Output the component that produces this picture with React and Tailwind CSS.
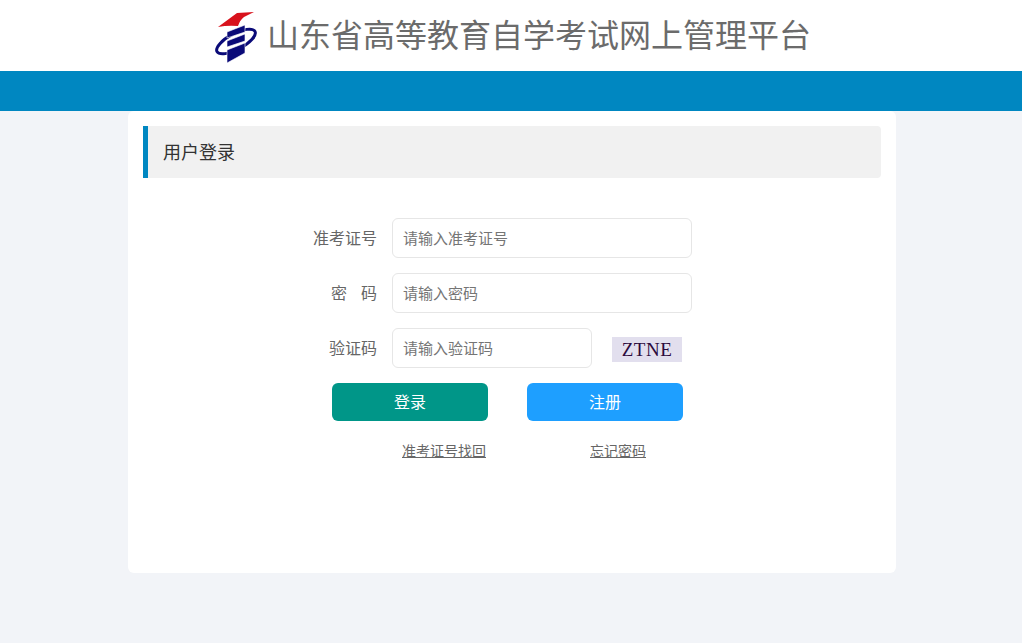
import React from 'react';

const fontStack = '"Noto Sans CJK SC", sans-serif';

function Logo() {
  return (
    <svg width="44" height="54" viewBox="-1 0 44 54" className="shrink-0 mt-[5px]">
      <path d="M4 16 L23 2 L40 1 L30 6 Q26 9 24 15 Q14 14 4 16 Z" fill="#d8121c" />
      <ellipse cx="22" cy="30.5" rx="21.5" ry="8" transform="rotate(-28 22 30.5)" fill="none" stroke="#0a0a78" strokeWidth="3" />
      <path d="M13 21 L31 14 L31 21 L13 27 Z M13 30 L31 23 L31 30 L13 36 Z M13 39 L31 32 L31 42 L13 52 Z" fill="#0a0a78" stroke="#fff" strokeWidth="0.6" />
    </svg>
  );
}

function Row({ label, placeholder, short, children }) {
  return (
    <div className="flex items-center h-10 mb-[15px]">
      <label className="w-[249px] pr-[15px] pb-[2px] text-right text-base text-[#666] whitespace-pre">{label}</label>
      <input
        type="text"
        placeholder={placeholder}
        className={`${short ? 'w-[200px]' : 'w-[300px]'} h-10 pl-[10px] pr-[10px] pb-[2px] bg-white border border-[#e6e6e6] rounded-md text-[15px] placeholder:text-[#757575] outline-none`}
      />
      {children}
    </div>
  );
}

export default function App() {
  return (
    <div className="min-h-[643px] bg-[#f2f4f8]" style={{ fontFamily: fontStack }}>
      <header className="h-[71px] bg-white flex items-center justify-center gap-[10px] pl-[2px]">
        <Logo />
        <h1 className="mb-[6px] text-[32px] leading-none text-[#6b6b6b] whitespace-nowrap">山东省高等教育自学考试网上管理平台</h1>
      </header>
      <div className="h-10 bg-[#0087c1]" />
      <main className="w-[768px] h-[462px] ml-[128px] bg-white rounded-md p-[15px]">
        <div className="h-[52px] pl-[15px] pb-[2px] flex items-center bg-[#f1f1f1] border-l-[5px] border-[#0087c1] rounded-r-sm text-lg text-[#333]">
          用户登录
        </div>
        <form className="mt-10">
          <Row label="准考证号" placeholder="请输入准考证号" />
          <Row label={<>密<span className="inline-block w-[14px]" />码</>} placeholder="请输入密码" />
          <Row label="验证码" placeholder="请输入验证码" short>
            <span className="ml-5 mt-[2px] w-[70px] h-[25px] bg-[#e2dfee] text-[#2b0a3d] text-center text-[19px] leading-[25px] tracking-[0.5px]" style={{ fontFamily: '"Liberation Serif", serif' }}>ZTNE</span>
          </Row>
          <div className="flex ml-[189px] gap-[39px]">
            <button type="button" className="w-[156px] h-[38px] pb-[2px] rounded-md bg-[#009688] text-white text-base">登录</button>
            <button type="button" className="w-[156px] h-[38px] pb-[2px] rounded-md bg-[#1e9fff] text-white text-base">注册</button>
          </div>
          <div className="flex ml-[259px] mt-[19px] gap-[104px] text-sm text-[#666] underline">
            <a href="#">准考证号找回</a>
            <a href="#">忘记密码</a>
          </div>
        </form>
      </main>
    </div>
  );
}
